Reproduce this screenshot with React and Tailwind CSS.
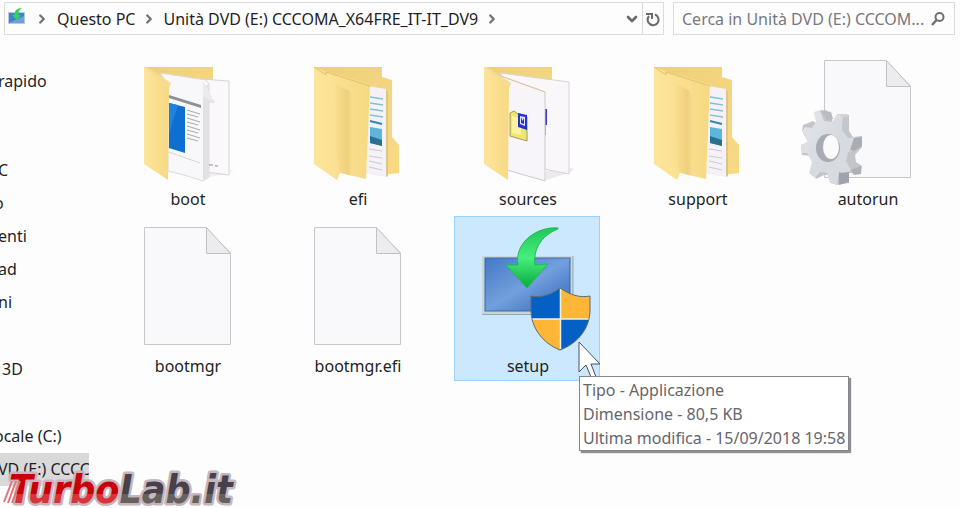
import { ChevronRight, ChevronDown } from "lucide-react";

// Left tree, scrolled sideways so only the end of each name shows
const groups = [
  { className: "", items: [{ name: "rapido" }] },
  {
    className: "mt-14",
    items: [
      { name: "C" },
      { name: "o", cut: true },
      { name: "enti" },
      { name: "ad" },
      { name: "ni" },
    ],
  },
  { className: "mt-[34px]", items: [{ name: "3D", indent: true }] },
  {
    className: "mt-[34px]",
    items: [{ name: "ocale (C:)", cut: true }, { name: "VD (E:) CCCC", active: true }],
  },
];

function DriveIcon() {
  return (
    <svg className="mb-1 h-5 w-5 shrink-0" viewBox="0 0 20 20">
      <rect x="1" y="5" width="17" height="12" fill="#b9cbd6" />
      <rect x="2" y="6" width="15" height="10" fill="#4580cc" />
      <path d="M2 16 L17 9 V16 Z" fill="#6aa2e0" />
      <path d="M15 1 C10 1 7 4 7.500 8 L5 8 L10 13 L14 8 L11.500 8 C11 5 12 3 15 1 Z" fill="#2fd45f" />
    </svg>
  );
}

function SearchGlyph() {
  return (
    <svg className="h-4 w-4 shrink-0" viewBox="0 0 16 16" fill="none" stroke="#6f6f72">
      <circle cx="9.500" cy="6" r="4" strokeWidth="2" />
      <path d="M6.500 9 L2 14" strokeWidth="2.500" />
    </svg>
  );
}

function RefreshGlyph() {
  return (
    <svg className="h-4 w-4" viewBox="0 0 16 16" fill="none" stroke="#69696e" strokeWidth="2">
      <path d="M10 3.500 A5.500 5.500 0 1 1 4 5" />
      <path d="M1 3 H7 V8" />
    </svg>
  );
}

function Icon({ children }) {
  return (
    <svg className="block h-[136px] w-36" viewBox="1 1 144 136">
      {children}
    </svg>
  );
}

function Defs() {
  return (
    <svg className="absolute h-0 w-0">
      <defs>
        <linearGradient id="cover" x1="0" y1="0" x2="1" y2="0">
          <stop offset="0" stopColor="#fde59b" />
          <stop offset="1" stopColor="#f7d983" />
        </linearGradient>
        <linearGradient id="back" x1="0" y1="0" x2="1" y2="1">
          <stop offset="0" stopColor="#eed07c" />
          <stop offset="1" stopColor="#f8da84" />
        </linearGradient>
        <linearGradient id="crease" x1="0" y1="0" x2="1" y2="0">
          <stop offset="0" stopColor="#edcd79" stopOpacity="0.1" />
          <stop offset="0.7" stopColor="#e6c671" stopOpacity="0.6" />
          <stop offset="1" stopColor="#f9de90" stopOpacity="0.3" />
        </linearGradient>
        <linearGradient id="screen" x1="0" y1="0" x2="1" y2="1">
          <stop offset="0" stopColor="#4478c8" />
          <stop offset="0.5" stopColor="#729fdd" />
          <stop offset="0.7" stopColor="#5787cf" />
          <stop offset="1" stopColor="#3d6cbd" />
        </linearGradient>
        <linearGradient id="arrow" x1="0" y1="0" x2="0" y2="1">
          <stop offset="0" stopColor="#22c65a" />
          <stop offset="0.5" stopColor="#45ee7d" />
          <stop offset="1" stopColor="#08a93c" />
        </linearGradient>
        <linearGradient id="gear" x1="0" y1="0" x2="1" y2="1">
          <stop offset="0" stopColor="#e4e5e8" />
          <stop offset="0.5" stopColor="#d6dbe0" />
          <stop offset="1" stopColor="#d9dade" />
        </linearGradient>
      </defs>
    </svg>
  );
}

function FolderCover() {
  return (
    <>
      <path d="M30 18 L55 36 L54 131 L30 115 Z" fill="url(#cover)" />
      <path d="M30 18 L33 18 L57 34 L55 40 Z" fill="#f6dc93" />
    </>
  );
}

function BootIcon() {
  return (
    <Icon>
      <path d="M94 124 L115 121 L120 121 L114 125 L95 128 Z" fill="#f1eff2" />
      <path d="M30 18 H99 V60 H50 Z" fill="url(#back)" />
      <path d="M87 30 L115 32 V126 L92 123 Z" fill="#faf8fa" stroke="#d6d3d8" />
      <path d="M86 38 L101 52 V54 H88 Z" fill="#e8e6e8" />
      <path d="M46 24 L92 31 L95 35 V128 L89 132 L70 126 L54 122 V36 Z" fill="#f8f7f9" stroke="#dcd9dd" />
      <path d="M89 38 L95 35 V128 L89 132 Z" fill="#e3e1e5" />
      <path d="M89 32 L100 52 L89 48 Z" fill="#eceaee" />
      <path d="M55 46 L87 56 V59 L55 49 Z" fill="#8d9095" />
      <path d="M55 54 L71 58 V104 L55 99 Z" fill="#0f6fd0" />
      <path d="M55 54 L64 56 L55 85 Z" fill="#1e82df" />
      <path d="M73 61 L86 65 M73 65 L84 68 M73 69 L86 73 M73 73 L84 76 M73 77 L86 81 M73 81 L84 84 M73 85 L86 89 M73 89 L84 92" stroke="#a9abb0" />
      <path d="M55 103 L86 114" stroke="#d8d6d0" />
      <path d="M95 116 h4 M101 117 h3" stroke="#8d8d90" />
      <FolderCover />
    </Icon>
  );
}

function FolderIcon() {
  return (
    <Icon>
      <path d="M30 18 H98 V28 L108 31 V88 L115 96 V124 L98 126 L60 60 Z" fill="url(#back)" />
      <path d="M84 37 L102 40 V128 L82 125 Z" fill="#f4f2f7" />
      <path d="M102 40 L104 43 V127 L102 128 Z" fill="#dcc58c" />
      <path d="M86 48 L99 50 M86 54 L99 56 M86 60 L99 62 M86 66 L99 68" stroke="#86c0da" strokeWidth="1.500" />
      <path d="M86 72 L98 75" stroke="#3287b5" strokeWidth="2" />
      <path d="M86 78 L98 80 V97 L86 94 Z" fill="#5fb4de" />
      <path d="M86 87 L98 91 V97 L86 94 Z" fill="#29708f" />
      <path d="M85 100 L98 102 M85 107 L98 109 M85 112 L98 115 M85 118 L98 121" stroke="#cfc8d3" />
      <path d="M30 18 L40 22 L86 35 L82 130 L56 124 L53 131 L30 115 Z" fill="url(#cover)" />
      <path d="M51 35 L66 42 L69 49 V90 L67 127 L55 123 L52 100 Z" fill="url(#crease)" />
      <path d="M30 18 L42 26 L42 23 L86 37" fill="none" stroke="#e3c16b" />
    </Icon>
  );
}

function SourcesIcon() {
  return (
    <Icon>
      <path d="M92 122 L118 119 L120 121 L112 125 L92 131 Z" fill="#eceaed" />
      <path d="M30 18 H98 V50 H50 Z" fill="url(#back)" />
      <path d="M46 24 L115 33 V125 L90 120 L70 60 Z" fill="#f9f7fa" stroke="#d5d2d6" />
      <path d="M90 60 h3 v16 h-3 Z" fill="#3737cf" />
      <path d="M90 76 h2 v10 h-2 Z" fill="#a7a778" />
      <path d="M44 26 L91 43 V132 L53 121 V34 Z" fill="#f7f5f9" stroke="#cfcac8" />
      <path d="M44 26 L91 43" stroke="#ddc992" />
      <path d="M56 64 L60 62 L64 65 L73 68 V92 L56 87 Z" fill="#efe573" stroke="#a39a5c" />
      <path d="M58 67 L67 70 V86 L58 84 Z" fill="#faf4a0" />
      <path d="M64 64 L73 66 V81 L64 78 Z" fill="#2630cc" />
      <path d="M66 67 L71 68 V77 L66 75 Z" fill="#dfe2fa" />
      <path d="M67 68 L68.500 72 L70 69 V75 L67 74 Z" fill="#2630cc" />
      <FolderCover />
    </Icon>
  );
}

function Sheet() {
  return (
    <>
      <path d="M30.500 11.500 H92 L116.500 37 V128.500 H30.500 Z" fill="#f9f8fb" stroke="#c9c6cc" />
      <path d="M92.500 11.500 V37.500 H116.500 Z" fill="#ecebee" stroke="#c3c0c6" />
    </>
  );
}

function FileIcon() {
  return (
    <Icon>
      <Sheet />
    </Icon>
  );
}

function AutorunIcon() {
  return (
    <Icon>
      <Sheet />
      <path d="M22 63 L32 61 L38 66 L38 74 L44 76 L50 65 L55 66 L55 82 L59 88 L68 87 V98 L61 106 L62 113 L68 117 L67 125 L55 124 V134 L42 136 L38 126 L30 126 L22 130 L19 123 L22 116 L18 107 L8 106 L7 96 L14 93 L8 82 L9 76 L19 72 L24 76 Z" fill="#c3c5c9" />
      <path d="M20 63 L26 61 L30 72 L38 73 L43 65 L49 68 L48 81 L54 89 L62 88 V101 L54 103 L52 112 L57 121 L51 126 L45 122 L43 136 L36 134 L33 124 L26 123 L21 129 L15 124 L18 113 L13 104 L8 104 L7 96 L14 93 L8 82 L11 78 L18 79 L22 73 Z" fill="url(#gear)" />
      <path d="M26 61 L37 63 L39 70 L34 72 Z" fill="#b9bbc0" />
      <path d="M43 65 L53 65 L55 68 L49 69 Z" fill="#d3d4d7" />
      <path d="M49 68 L55 67 V72 L51 83 L48 81 Z" fill="#c5c7cb" />
      <path d="M60 89 L68 88 V97 L60 102 L56 101 Z" fill="#a9acb2" />
      <path d="M57 121 L67 117 V125 L60 126 Z" fill="#aeb0b5" />
      <path d="M45 124 L55 123 V133 L45 136 Z" fill="#a0a3ab" />
      <ellipse cx="34" cy="99" rx="12" ry="14" fill="#a7abb3" />
      <ellipse cx="37" cy="98" rx="8" ry="12" fill="#fafafc" />
    </Icon>
  );
}

function SetupIcon() {
  return (
    <Icon>
      <rect x="28" y="40" width="91" height="59" fill="#c6d6d9" />
      <path d="M28 98.500 H119 V40" fill="none" stroke="#93a9b4" />
      <rect x="31" y="42" width="85" height="53" fill="url(#screen)" stroke="#3d69a9" />
      <path d="M104 12 C84 10 60 26 64 49 H52 L73 72 L94 48 L81 49 C79 35 86 20 104 13 Z" fill="url(#arrow)" stroke="#20bb57" />
      <path d="M106 72 C97 79 87 82 77 80 V94 C77 111 88 127 106 134 C125 127 136 111 136 94 V80 C126 82 116 79 106 72 Z" fill="#ffb636" />
      <path d="M106 72 C97 79 87 82 77 80 V94 L78 103 H106 Z" fill="#0460c4" />
      <path d="M106 134 C122 128 132 116 135 103 H106 Z" fill="#0460c4" />
      <path d="M106.500 73 V133 M78 103 H135" stroke="#f3f1e8" strokeWidth="1.500" />
      <path d="M106 72 C97 79 87 82 77 80 V94 C77 111 88 127 106 134 C125 127 136 111 136 94 V80 C126 82 116 79 106 72 Z" fill="none" stroke="#5f6b73" />
    </Icon>
  );
}

const files = [
  { name: "boot", icon: BootIcon },
  { name: "efi", icon: FolderIcon },
  { name: "sources", icon: SourcesIcon },
  { name: "support", icon: FolderIcon },
  { name: "autorun", icon: AutorunIcon },
  { name: "bootmgr", icon: FileIcon },
  { name: "bootmgr.efi", icon: FileIcon },
  {
    name: "setup",
    icon: SetupIcon,
    selected: true,
    info: ["Tipo - Applicazione", "Dimensione - 80,5 KB", "Ultima modifica - 15/09/2018 19:58"],
  },
];

function Tooltip({ lines }) {
  return (
    <div
      role="tooltip"
      className="absolute top-40 left-[125px] z-10 border border-[#85858c] bg-white px-[3px] pt-px text-left whitespace-nowrap text-[#66656a] shadow-[2px_2px_1px_#8f8f94]"
    >
      {lines.map((line) => (
        <p key={line} className="leading-6">{line}</p>
      ))}
    </div>
  );
}

function Cursor() {
  return (
    <svg className="absolute top-[125px] left-[124px] h-9 w-6" viewBox="0 0 24 36">
      <path d="M1 1 V31 L8 24 L13 36 H18 L13 23 H22 Z" fill="#fff" stroke="#44506a" />
    </svg>
  );
}

function FileTile({ file }) {
  const { name, icon: FileArt, selected, info } = file;
  return (
    <li className="relative">
      <button
        className={
          selected
            ? "w-full border border-[#99d1ff] bg-[#cce8ff] pb-px"
            : "w-full border border-transparent pb-px"
        }
      >
        <FileArt />
        <span className="block pl-0.5 text-center leading-[26px]">{name}</span>
      </button>
      {selected && <Cursor />}
      {info && <Tooltip lines={info} />}
    </li>
  );
}

function Watermark() {
  return (
    <svg className="absolute top-[466px] left-0 h-[42px] w-[244px]" viewBox="0 0 244 42">
      <defs>
        <linearGradient id="red" x1="0" y1="0" x2="0" y2="1">
          <stop offset="0.6" stopColor="#c90009" />
          <stop offset="0.6" stopColor="#d8323a" />
        </linearGradient>
        <linearGradient id="grey" x1="0" y1="0" x2="0" y2="1">
          <stop offset="0.6" stopColor="#47414a" />
          <stop offset="0.6" stopColor="#66615f" />
        </linearGradient>
      </defs>
      <text
        x="9"
        y="37"
        className="font-['DejaVu_Sans_Condensed','Liberation_Sans',sans-serif] text-[39px] font-bold italic"
        stroke="#c5b7bd"
        strokeWidth="5"
        strokeLinejoin="round"
        paintOrder="stroke"
      >
        <tspan fill="url(#red)">Turbo</tspan>
        <tspan fill="url(#grey)">Lab.it</tspan>
      </text>
      <path d="M4 36 L12 15 M8 37 L16 15 M12 37 L20 15" stroke="#e0757c" strokeWidth="2" />
    </svg>
  );
}

export default function App() {
  return (
    <div className="relative min-h-screen overflow-hidden bg-[#fdfdfe] font-['Noto_Sans','Open_Sans',sans-serif] text-base text-[#1f1f24]">
      <Defs />
      <header className="flex gap-[9px] pt-0.5 pr-[5px] pl-1">
        <nav className="flex h-[33px] min-w-0 flex-1 items-center border border-[#dcdcde] pl-0.5">
          <DriveIcon />
          <ChevronRight className="mx-2 h-3.5 w-3.5 shrink-0 text-[#737378]" strokeWidth={4} />
          <button>Questo PC</button>
          <ChevronRight className="mx-[7px] h-3.5 w-3.5 shrink-0 text-[#737378]" strokeWidth={4} />
          <button className="whitespace-nowrap">Unità DVD (E:) CCCOMA_X64FRE_IT-IT_DV9</button>
          <ChevronRight className="mx-[7px] h-3.5 w-3.5 shrink-0 text-[#737378]" strokeWidth={4} />
          <button aria-label="Posizioni precedenti" className="ml-auto px-0.5">
            <ChevronDown className="h-4 w-4 text-[#69696e]" strokeWidth={4} />
          </button>
          <button aria-label="Aggiorna" className="flex h-full items-center border-l border-[#dcdcde] px-0.5">
            <RefreshGlyph />
          </button>
        </nav>
        <form className="flex h-[33px] w-[282px] items-center border border-[#dcdcde] pr-2 pl-2">
          <input
            type="search"
            aria-label="Cerca"
            placeholder="Cerca in Unità DVD (E:) CCCOM..."
            className="-mr-1 min-w-0 flex-1 appearance-none bg-transparent outline-none placeholder:text-[#78787d] [&::-webkit-search-cancel-button]:hidden"
          />
          <SearchGlyph />
        </form>
      </header>

      <div className="flex">
        <aside className="w-[89px] shrink-0 overflow-hidden pt-[30px]">
          {groups.map((group) => (
            <ul key={group.items[0].name} className={group.className}>
              {group.items.map((item) => (
                <li key={item.name} className={item.active ? "bg-[#dad8da]" : ""}>
                  <button
                    className={
                      item.cut
                        ? "-ml-1.5 block leading-[33px] whitespace-nowrap"
                        : item.indent
                          ? "ml-0.5 block leading-[33px] whitespace-nowrap"
                          : "-ml-0.5 block leading-[33px] whitespace-nowrap"
                    }
                  >
                    {item.name}
                  </button>
                </li>
              ))}
            </ul>
          ))}
        </aside>
        <main className="min-w-0 flex-1 pt-3.5 pl-[25px]">
          <ul className="grid grid-cols-[repeat(auto-fill,146px)] gap-x-6 gap-y-0.5">
            {files.map((file) => (
              <FileTile key={file.name} file={file} />
            ))}
          </ul>
        </main>
      </div>
      <Watermark />
    </div>
  );
}
